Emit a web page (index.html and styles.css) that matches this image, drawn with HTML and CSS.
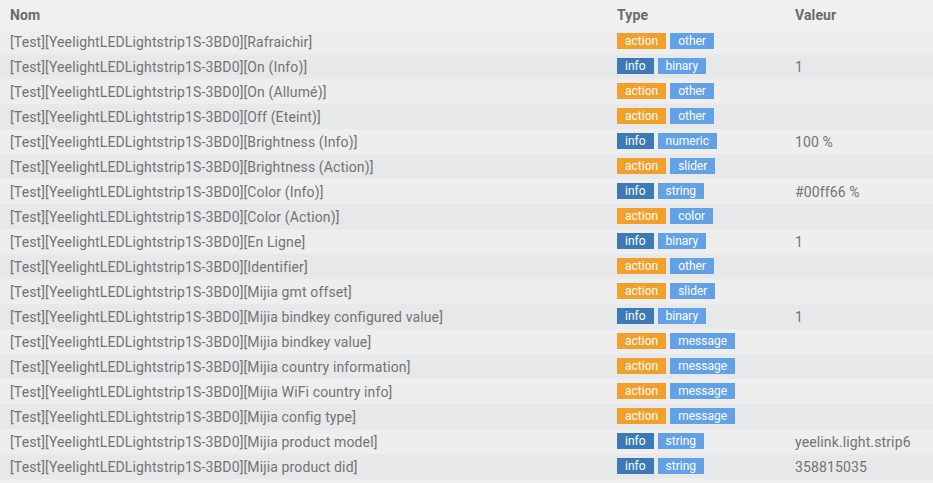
FILE: index.html
```html
<!DOCTYPE html>
<html lang="fr">
<head>
<meta charset="utf-8">
<title>Commandes</title>
<link rel="stylesheet" href="styles.css">
</head>
<body>
<table class="cmds">
  <thead>
    <tr><th class="c-name">Nom</th><th class="c-type">Type</th><th class="c-val">Valeur</th></tr>
  </thead>
  <tbody>
    <tr><td>[Test][YeelightLEDLightstrip1S-3BD0][Rafraichir]</td><td><span class="lbl act">action</span><span class="lbl sub">other</span></td><td></td></tr>
    <tr><td>[Test][YeelightLEDLightstrip1S-3BD0][On (Info)]</td><td><span class="lbl inf">info</span><span class="lbl sub">binary</span></td><td>1</td></tr>
    <tr><td>[Test][YeelightLEDLightstrip1S-3BD0][On (Allumé)]</td><td><span class="lbl act">action</span><span class="lbl sub">other</span></td><td></td></tr>
    <tr><td>[Test][YeelightLEDLightstrip1S-3BD0][Off (Eteint)]</td><td><span class="lbl act">action</span><span class="lbl sub">other</span></td><td></td></tr>
    <tr><td>[Test][YeelightLEDLightstrip1S-3BD0][Brightness (Info)]</td><td><span class="lbl inf">info</span><span class="lbl sub">numeric</span></td><td>100 %</td></tr>
    <tr><td>[Test][YeelightLEDLightstrip1S-3BD0][Brightness (Action)]</td><td><span class="lbl act">action</span><span class="lbl sub">slider</span></td><td></td></tr>
    <tr><td>[Test][YeelightLEDLightstrip1S-3BD0][Color (Info)]</td><td><span class="lbl inf">info</span><span class="lbl sub">string</span></td><td>#00ff66 %</td></tr>
    <tr><td>[Test][YeelightLEDLightstrip1S-3BD0][Color (Action)]</td><td><span class="lbl act">action</span><span class="lbl sub">color</span></td><td></td></tr>
    <tr><td>[Test][YeelightLEDLightstrip1S-3BD0][En Ligne]</td><td><span class="lbl inf">info</span><span class="lbl sub">binary</span></td><td>1</td></tr>
    <tr><td>[Test][YeelightLEDLightstrip1S-3BD0][Identifier]</td><td><span class="lbl act">action</span><span class="lbl sub">other</span></td><td></td></tr>
    <tr><td>[Test][YeelightLEDLightstrip1S-3BD0][Mijia gmt offset]</td><td><span class="lbl act">action</span><span class="lbl sub">slider</span></td><td></td></tr>
    <tr><td>[Test][YeelightLEDLightstrip1S-3BD0][Mijia bindkey configured value]</td><td><span class="lbl inf">info</span><span class="lbl sub">binary</span></td><td>1</td></tr>
    <tr><td>[Test][YeelightLEDLightstrip1S-3BD0][Mijia bindkey value]</td><td><span class="lbl act">action</span><span class="lbl sub">message</span></td><td></td></tr>
    <tr><td>[Test][YeelightLEDLightstrip1S-3BD0][Mijia country information]</td><td><span class="lbl act">action</span><span class="lbl sub">message</span></td><td></td></tr>
    <tr><td>[Test][YeelightLEDLightstrip1S-3BD0][Mijia WiFi country info]</td><td><span class="lbl act">action</span><span class="lbl sub">message</span></td><td></td></tr>
    <tr><td>[Test][YeelightLEDLightstrip1S-3BD0][Mijia config type]</td><td><span class="lbl act">action</span><span class="lbl sub">message</span></td><td></td></tr>
    <tr><td>[Test][YeelightLEDLightstrip1S-3BD0][Mijia product model]</td><td><span class="lbl inf">info</span><span class="lbl sub">string</span></td><td>yeelink.light.strip6</td></tr>
    <tr><td>[Test][YeelightLEDLightstrip1S-3BD0][Mijia product did]</td><td><span class="lbl inf">info</span><span class="lbl sub">string</span></td><td>358815035</td></tr>
  </tbody>
</table>
</body>
</html>
```

FILE: styles.css
```css
html, body {
  margin: 0;
  padding: 0;
  background: #eeefef;
}
body {
  font-family: Roboto, "Liberation Sans", sans-serif;
  font-size: 14px;
  font-weight: 400;
  letter-spacing: 0.13px;
  color: #737373;
}
.cmds {
  width: 933px;
  border-collapse: collapse;
  border-spacing: 0;
  table-layout: fixed;
}
.cmds th {
  height: 29px;
  padding: 0 10px;
  text-align: left;
  font-weight: bold;
  color: #6a6a6a;
  background: #f0f0f0;
  vertical-align: middle;
}
.c-name { width: 587px; }
.c-type { width: 158px; }
.cmds td {
  height: 25px;
  padding: 0 10px;
  vertical-align: middle;
  white-space: nowrap;
}
.cmds tbody tr:nth-child(odd) { background: #edeeed; }
.cmds tbody tr:nth-child(even) { background: #e7e8e9; }
.lbl {
  display: inline-block;
  height: 16px;
  line-height: 16px;
  padding: 0 8px;
  margin-right: 4px;
  font-size: 12px;
  font-weight: 400;
  letter-spacing: 0;
  color: #ffffff;
  vertical-align: middle;
  position: relative;
  top: -1px;
}
.act { background: #f2a02b; }
.inf { background: #3b7ab7; }
.sub { background: #62a1e6; }
```
